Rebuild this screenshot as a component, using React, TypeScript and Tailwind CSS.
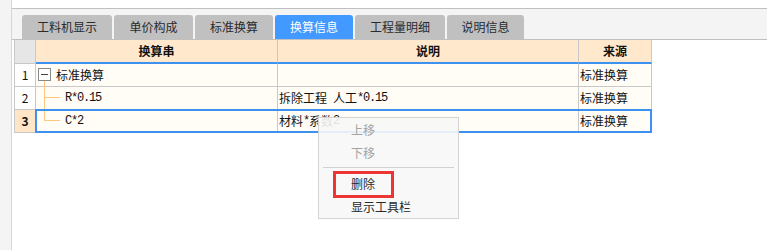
import React from 'react';

const tabs = [
  { label: '工料机显示', w: 'w-[90px]', active: false },
  { label: '单价构成', w: 'w-[79px]', active: false },
  { label: '标准换算', w: 'w-[78px]', active: false },
  { label: '换算信息', w: 'w-[78px]', active: true },
  { label: '工程量明细', w: 'w-[90px]', active: false },
  { label: '说明信息', w: 'w-[77px]', active: false },
];

const Mono: React.FC<{ children: React.ReactNode }> = ({ children }) => (
  <span className="font-['Liberation_Mono',monospace] tracking-[-1.2px]">{children}</span>
);

// tree connector drawn per row
const TreeBox = () => (
  <svg width="18" height="22" className="shrink-0 overflow-visible">
    <rect x="0.5" y="4.5" width="12" height="12" fill="#fff" stroke="#8a8a8a" />
    <line x1="3" y1="10.5" x2="10" y2="10.5" stroke="#444" />
    <line x1="6.5" y1="17" x2="6.5" y2="23" stroke="#ffc680" />
  </svg>
);

const TreeMid = () => (
  <svg width="27" height="22" className="shrink-0 overflow-visible">
    <line x1="6.5" y1="0" x2="6.5" y2="23" stroke="#ffc680" />
    <line x1="6.5" y1="10.5" x2="22" y2="10.5" stroke="#ffc680" />
  </svg>
);

const TreeEnd = () => (
  <svg width="27" height="22" className="shrink-0 overflow-visible">
    <line x1="6.5" y1="0" x2="6.5" y2="10.5" stroke="#ffc680" />
    <line x1="6.5" y1="10.5" x2="22" y2="10.5" stroke="#ffc680" />
  </svg>
);

const ContextMenu = () => (
  <div className="absolute left-[306px] top-[117px] w-[141px] border border-[#d4d4d4] bg-[#f7f7f7]/90">
    <div className="h-[23px] flex items-center pl-[32px] text-[#a3a3a3]">上移</div>
    <div className="h-[23px] flex items-center pl-[32px] text-[#a3a3a3]">下移</div>
    <div className="mt-[3px] mb-[4px] mx-[4px] h-px bg-[#d2d2d2]" />
    <div className="h-[23px] flex items-center pl-[32px] text-[#2a2a2a]">删除</div>
    <div className="h-[23px] flex items-center pl-[32px] text-[#2a2a2a]">显示工具栏</div>
    <div className="absolute left-[14px] top-[53px] w-[61px] h-[27px] border-[3px] border-[#ee3535]" />
  </div>
);

export default function App() {
  return (
    <div className="w-[767px] h-[250px] flex bg-white overflow-hidden font-['Noto_Sans_CJK_SC',sans-serif] text-[12px] text-[#111]">
      <div className="w-[12px] shrink-0 bg-[#f4f4f4] border-r border-[#d6d6d6]" />
      <div className="relative flex-1 flex flex-col">
        <div className="h-[8px] shrink-0" />

        {/* Tabs */}
        <div className="h-[32px] shrink-0 bg-[#f4f4f4] border-y border-[#c0c0c0] flex items-end gap-[2px] pl-[10px]">
          {tabs.map(t => (
            <div
              key={t.label}
              className={`${t.w} h-[24px] rounded-t-[3px] flex items-center justify-center ${t.active ? 'bg-[#4299ff] text-white' : 'bg-[#c0c0c0] text-[#2a2a2a]'}`}
            >
              {t.label}
            </div>
          ))}
        </div>

        {/* Grid */}
        <div className="pl-[2px]">
          <div className="w-[638px]">
            {/* Header */}
            <div className="h-[24px] flex">
              <div className="w-[22px] border-x border-b border-[#c8c8c8] bg-[#e6e6e6]" />
              <div className="w-[242px] border-r border-r-[#c8c8c8] border-b-2 border-b-[#3d91f0] bg-[#ffe8cb] font-bold flex items-center justify-center">换算串</div>
              <div className="w-[301px] border-r border-r-[#c8c8c8] border-b-2 border-b-[#3d91f0] bg-[#ffe8cb] font-bold flex items-center justify-center">说明</div>
              <div className="w-[73px] border-r border-r-[#c8c8c8] border-b-2 border-b-[#3d91f0] bg-[#ffe8cb] font-bold flex items-center justify-center">来源</div>
            </div>

            {/* Row 1 */}
            <div className="h-[23px] flex">
              <div className="w-[22px] border-x border-b border-[#c8c8c8] bg-white flex items-center justify-center">1</div>
              <div className="w-[242px] border-r border-b border-[#c8c8c8] bg-[#fffdf6] flex items-center pl-[2px]">
                <TreeBox />
                <span>标准换算</span>
              </div>
              <div className="w-[301px] border-r border-b border-[#c8c8c8] bg-[#fffdf6]" />
              <div className="w-[73px] border-r border-b border-[#c8c8c8] bg-[#fffdf6] flex items-center pl-[1px]">标准换算</div>
            </div>

            {/* Row 2 */}
            <div className="h-[23px] flex">
              <div className="w-[22px] border-x border-b border-[#c8c8c8] bg-white flex items-center justify-center">2</div>
              <div className="w-[242px] border-r border-b border-[#c8c8c8] bg-[#fffdf6] flex items-center pl-[2px]">
                <TreeMid />
                <Mono>R*0.15</Mono>
              </div>
              <div className="w-[301px] border-r border-b border-[#c8c8c8] bg-[#fffdf6] flex items-center pl-[1px]">
                <span className="mr-[6px]">拆除工程</span>
                <span>人工</span>
                <Mono>*0.15</Mono>
              </div>
              <div className="w-[73px] border-r border-b border-[#c8c8c8] bg-[#fffdf6] flex items-center pl-[1px]">标准换算</div>
            </div>

            {/* Row 3 (selected) */}
            <div className="relative h-[23px] flex">
              <div className="w-[22px] border-x border-b border-[#c8c8c8] bg-[#ffe6c6] font-bold flex items-center justify-center">3</div>
              <div className="w-[242px] border-r border-b border-[#c8c8c8] bg-[#fffdf6] flex items-center pl-[2px]">
                <TreeEnd />
                <Mono>C*2</Mono>
              </div>
              <div className="w-[301px] border-r border-b border-[#c8c8c8] bg-[#fffdf6] flex items-center pl-[1px]">
                <span>材料</span>
                <Mono>*</Mono>
                <span>系数</span>
                <Mono>2</Mono>
              </div>
              <div className="w-[73px] border-r border-b border-[#c8c8c8] bg-[#fffdf6] flex items-center pl-[1px]">标准换算</div>
              <div className="absolute left-[21px] -top-px w-[617px] h-[24px] border-2 border-[#3d91f0] pointer-events-none" />
            </div>
          </div>
        </div>

        <ContextMenu />
      </div>
    </div>
  );
}
